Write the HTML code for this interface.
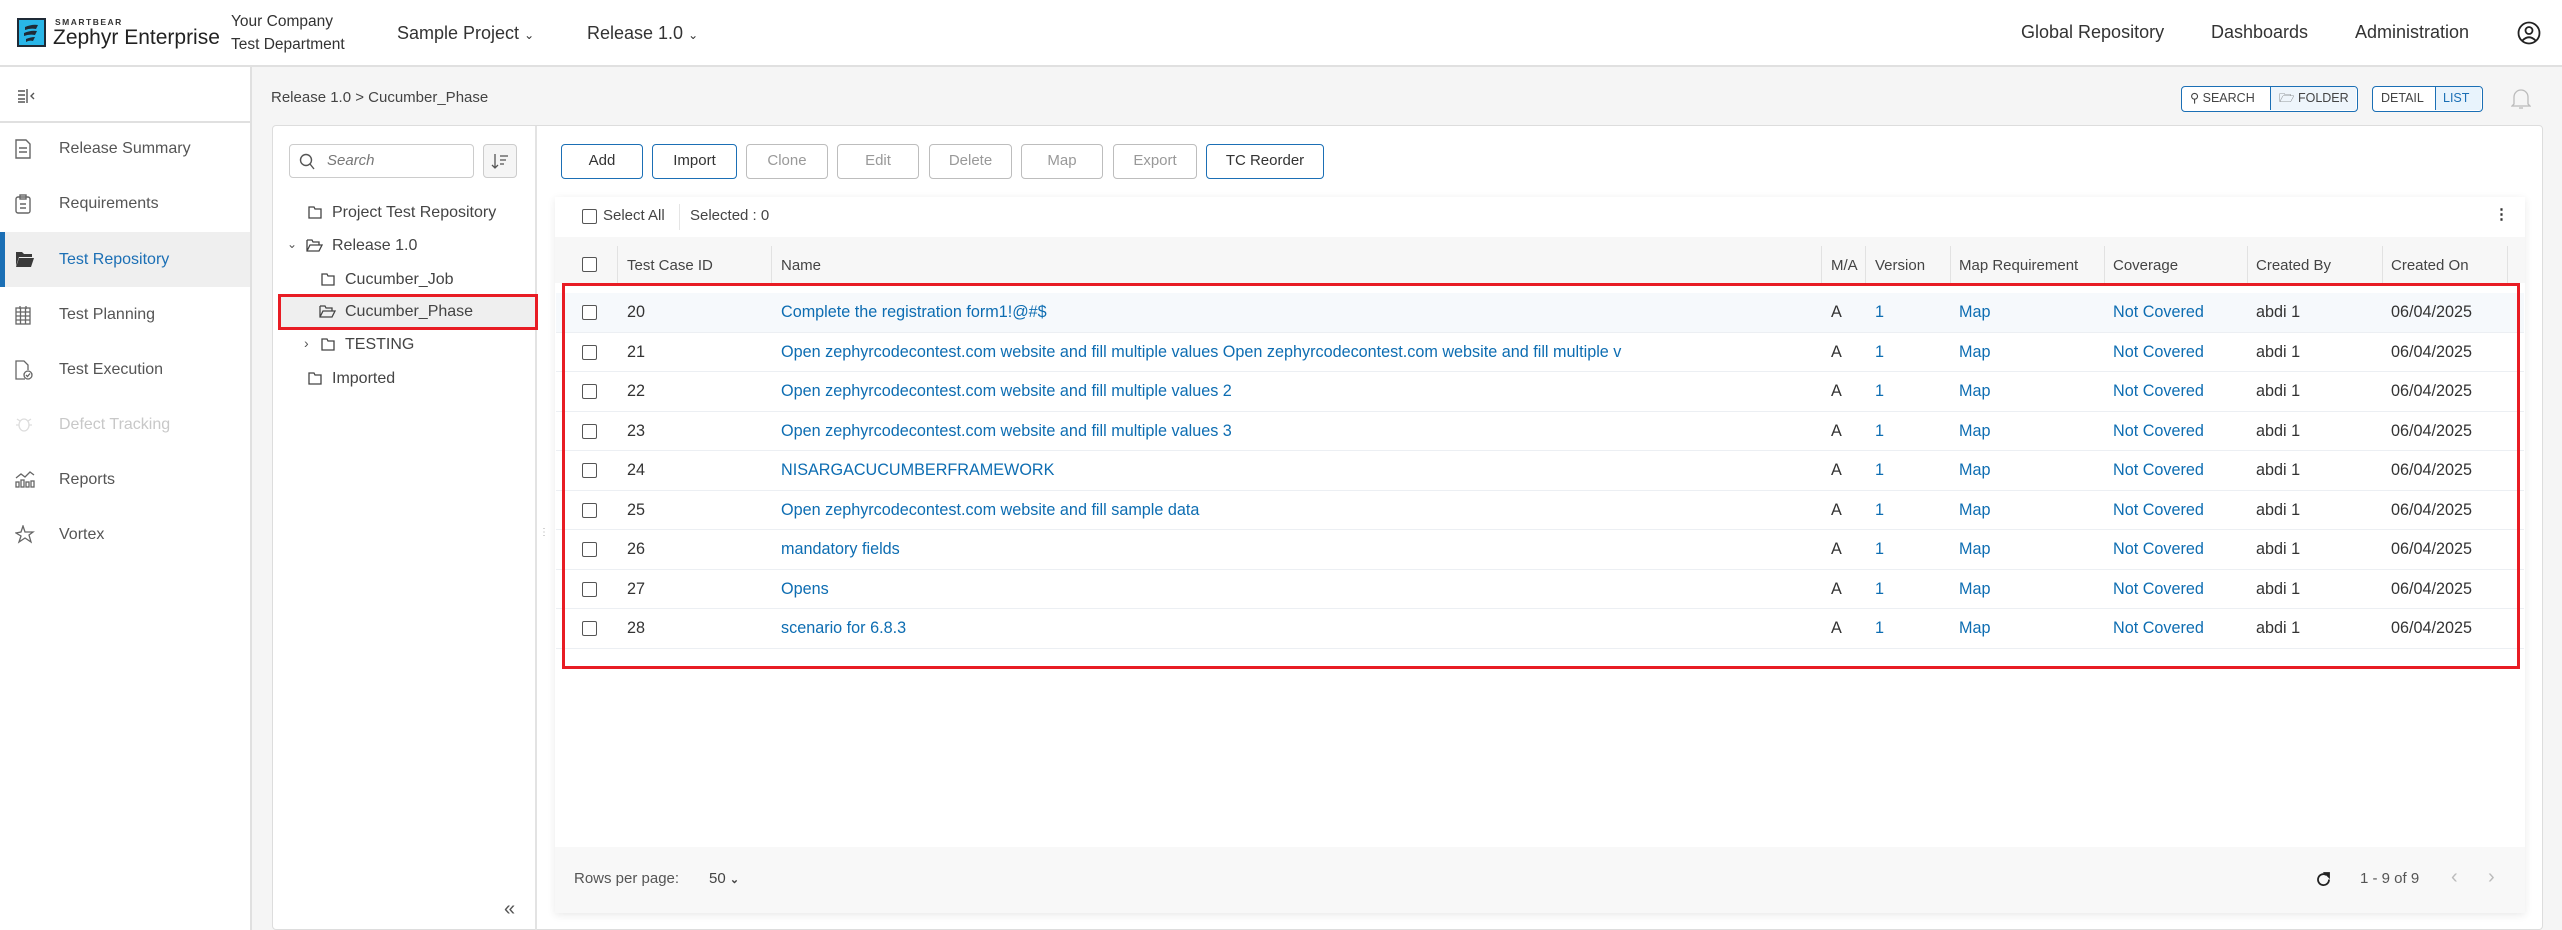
<!DOCTYPE html>
<html><head><meta charset="utf-8"><style>
*{box-sizing:border-box;margin:0;padding:0}
body{width:2562px;height:930px;overflow:hidden;background:#f5f5f5;font-family:"Liberation Sans",sans-serif;color:#333;position:relative}
.a{position:absolute;white-space:nowrap}
.hdr{left:0;top:0;width:2562px;height:67px;background:#fff;border-bottom:2px solid #e0e0e0}
.side{left:0;top:67px;width:252px;height:863px;background:#fff;border-right:2px solid #e0e0e0}
.nav{left:0;width:250px;height:55px;font-size:16px;color:#555;line-height:55px;padding-left:59px}
.nav svg{position:absolute;left:15px;top:18px}
.btn{top:144px;height:35px;border:1.5px solid #1b6fb5;border-radius:4px;font-size:15px;text-align:center;line-height:32px;color:#333;background:#fff}
.dis{border-color:#bdbdbd;color:#999}
.th{top:243px;height:46px;line-height:46px;font-size:15px;color:#444}
.cb{width:15px;height:15px;border:1.5px solid #555;border-radius:2px;background:#fff}
.row{left:556px;width:1968px;height:39.5px;border-bottom:1px solid #eceff3;font-size:16.2px;line-height:39px}
.row span{position:absolute}
.l{color:#0d6db2}
.tree{font-size:16px;color:#444;line-height:20px}
</style></head><body>
<div class="a hdr"></div>
<svg class="a" style="left:17px;top:18px" width="29" height="29" viewBox="0 0 29 29"><rect width="29" height="29" fill="#1f2a36"/><rect x="2" y="2" width="25" height="25" fill="#29b6e8"/><path d="M8 9 Q15 6 21 7 L19 11 Q13 10 8 12Z M7 15 Q14 12 20 13 L18 17 Q12 16 7 18Z M9 21 Q14 19 18 19 L16 23 Q12 22 9 24Z" fill="#1f2a36"/></svg>
<div class="a" style="left:55px;top:17px;font-size:8.5px;letter-spacing:1.5px;color:#333;font-weight:bold">SMARTBEAR</div>
<div class="a" style="left:53px;top:26px;font-size:21px;color:#222">Zephyr Enterprise</div>
<div class="a" style="left:231px;top:13px;font-size:15.5px;color:#333">Your Company</div>
<div class="a" style="left:231px;top:36px;font-size:15.5px;color:#333">Test Department</div>
<div class="a" style="left:397px;top:23px;font-size:18px;color:#333">Sample Project <span style="font-size:12px">&#8964;</span></div>
<div class="a" style="left:587px;top:23px;font-size:18px;color:#333">Release 1.0 <span style="font-size:12px">&#8964;</span></div>
<div class="a" style="left:2021px;top:22px;font-size:18px;color:#333">Global Repository</div>
<div class="a" style="left:2211px;top:22px;font-size:18px;color:#333">Dashboards</div>
<div class="a" style="left:2355px;top:22px;font-size:18px;color:#333">Administration</div>
<svg class="a" style="left:2517px;top:21px" width="24" height="24" viewBox="0 0 24 24" fill="none" stroke="#222" stroke-width="1.8"><circle cx="12" cy="12" r="10.5"/><circle cx="12" cy="9.5" r="3.5"/><path d="M5.5 19.5 Q12 13 18.5 19.5"/></svg>

<div class="a side"></div>
<div class="a" style="left:0;top:121px;width:250px;height:1.5px;background:#e0e0e0"></div>
<svg class="a" style="left:17px;top:88px" width="20" height="16" viewBox="0 0 20 16" fill="none" stroke="#555" stroke-width="1.4"><path d="M1 3h7M1 7h7M1 11h7M1 14h7M10 1v14M17 5l-3 3 3 3"/></svg>
<div class="a nav" style="top:121px"><svg width="16" height="20" viewBox="0 0 16 20" fill="none" stroke="#666" stroke-width="1.4"><path d="M1 1h10l4 4v14H1z"/><path d="M4 9h8M4 13h8"/></svg>Release Summary</div>
<div class="a nav" style="top:176px"><svg width="16" height="20" viewBox="0 0 16 20" fill="none" stroke="#666" stroke-width="1.4"><rect x="1" y="3" width="14" height="16" rx="2"/><rect x="5" y="1" width="6" height="4"/><path d="M5 10h6M5 14h6"/></svg>Requirements</div>
<div class="a nav" style="top:232px;height:55px;background:#efefef;color:#1b6fb5;border-left:5px solid #1b6fb5;padding-left:54px"><svg style="left:10px" width="20" height="18" viewBox="0 0 20 18"><path d="M1 2h6l2 2h8v3H4L1 16z" fill="#3a3a3a"/><path d="M4 8h15l-3 9H1z" fill="#3a3a3a"/></svg>Test Repository</div>
<div class="a nav" style="top:287px"><svg width="16" height="20" viewBox="0 0 16 20" fill="none" stroke="#666" stroke-width="1.3"><rect x="1" y="3" width="14" height="16"/><path d="M1 7h14M1 11h14M1 15h14M5.5 3v16M10.5 3v16M5 1v3M11 1v3"/></svg>Test Planning</div>
<div class="a nav" style="top:342px"><svg width="18" height="20" viewBox="0 0 18 20" fill="none" stroke="#666" stroke-width="1.3"><path d="M10 19H1V1h8l4 4v5"/><circle cx="13" cy="15" r="4"/><path d="M11 15l1.5 1.5 2.5-3"/></svg>Test Execution</div>
<div class="a nav" style="top:397px;color:#c8c8c8"><svg width="18" height="18" viewBox="0 0 18 18" fill="none" stroke="#ddd" stroke-width="1.3"><ellipse cx="9" cy="10" rx="5" ry="6"/><path d="M1 10h3M14 10h3M2 4l3 2M16 4l-3 2"/></svg>Defect Tracking</div>
<div class="a nav" style="top:452px"><svg width="20" height="18" viewBox="0 0 20 18" fill="none" stroke="#666" stroke-width="1.3"><path d="M1 8l5-4 4 3 5-5 4 3"/><rect x="1" y="12" width="3" height="5"/><rect x="6" y="10" width="3" height="7"/><rect x="11" y="12" width="3" height="5"/><rect x="16" y="11" width="3" height="6"/></svg>Reports</div>
<div class="a nav" style="top:507px"><svg width="20" height="20" viewBox="0 0 20 20" fill="none" stroke="#666" stroke-width="1.3"><path d="M8 1l2 6h8l-4 3 2 7-6-4-6 4 2-6-5-3 5-1z"/></svg>Vortex</div>

<div class="a" style="left:271px;top:89px;font-size:15px;color:#444">Release 1.0 &gt; Cucumber_Phase</div>
<div class="a" style="left:2181px;top:86px;width:177px;height:26px;border:1.5px solid #1b6fb5;border-radius:4px;background:#fff;font-size:12.5px;color:#444;line-height:23px;overflow:hidden"><span style="position:absolute;left:8px">&#9906; SEARCH</span><span style="position:absolute;left:88px;top:0;width:86px;height:23px;border-left:1.5px solid #1b6fb5;background:#eef5fb;padding-left:8px">&#128449; FOLDER</span></div>
<div class="a" style="left:2372px;top:86px;width:111px;height:26px;border:1.5px solid #1b6fb5;border-radius:4px;background:#fff;font-size:12.5px;color:#444;line-height:23px;overflow:hidden"><span style="position:absolute;left:8px">DETAIL</span><span style="position:absolute;left:62px;width:46px;height:23px;border-left:1.5px solid #1b6fb5;background:#e8f3fc;color:#1b6fb5;padding-left:7px">LIST</span></div>
<svg class="a" style="left:2511px;top:88px" width="20" height="22" viewBox="0 0 20 22" fill="none" stroke="#bbb" stroke-width="1.3"><path d="M3 16V9a7 7 0 0114 0v7l2 2H1z M8 20h4"/></svg>

<div class="a" style="left:272px;top:125px;width:2271px;height:805px;background:#fff;border:1.5px solid #ddd;border-radius:4px"></div>
<div class="a" style="left:535px;top:126px;width:1.5px;height:804px;background:#e3e3e3"></div>
<div class="a" style="left:539px;top:530px;font-size:10px;color:#aaa;line-height:5px">⋮</div>
<div class="a" style="left:289px;top:144px;width:185px;height:34px;border:1.5px solid #ccc;border-radius:4px;font-size:15px;color:#777;font-style:italic;line-height:31px;padding-left:37px">Search</div>
<svg class="a" style="left:299px;top:153px" width="16" height="17" viewBox="0 0 16 17" fill="none" stroke="#555" stroke-width="1.4"><circle cx="7" cy="7" r="5.5"/><path d="M11 11l4 5"/></svg>
<div class="a" style="left:483px;top:144px;width:34px;height:34px;border:1.5px solid #ccc;border-radius:4px;background:#f5f5f5"></div>
<svg class="a" style="left:491px;top:152px" width="18" height="18" viewBox="0 0 18 18" fill="none" stroke="#555" stroke-width="1.3"><path d="M4 2v14M1 13l3 3 3-3M9 4h8M9 8h6M9 12h4"/></svg>

<svg class="a" style="left:308px;top:204px" width="14" height="16" viewBox="0 0 14 14" fill="none" stroke="#444" stroke-width="1.3"><path d="M1 2h5l1 2h6v9H1z"/></svg>
<div class="a tree" style="left:332px;top:203px">Project Test Repository</div>
<div class="a" style="left:287px;top:237px;font-size:12px;color:#555">&#8964;</div>
<svg class="a" style="left:306px;top:237px" width="17" height="16" viewBox="0 0 17 14" fill="none" stroke="#444" stroke-width="1.3"><path d="M1 2h5l1 2h6v3M1 2v11h12l3-6H4l-3 6"/></svg>
<div class="a tree" style="left:332px;top:236px">Release 1.0</div>
<svg class="a" style="left:321px;top:271px" width="14" height="16" viewBox="0 0 14 14" fill="none" stroke="#444" stroke-width="1.3"><path d="M1 2h5l1 2h6v9H1z"/></svg>
<div class="a tree" style="left:345px;top:270px">Cucumber_Job</div>
<div class="a" style="left:280px;top:296px;width:255px;height:33px;background:#efefef"></div>
<svg class="a" style="left:319px;top:303px" width="17" height="16" viewBox="0 0 17 14" fill="none" stroke="#444" stroke-width="1.3"><path d="M1 2h5l1 2h6v3M1 2v11h12l3-6H4l-3 6"/></svg>
<div class="a tree" style="left:345px;top:302px">Cucumber_Phase</div>
<div class="a" style="left:278px;top:294px;width:260px;height:36px;border:3px solid #e81c24"></div>
<div class="a" style="left:304px;top:335px;font-size:14px;color:#555">&#8250;</div>
<svg class="a" style="left:321px;top:336px" width="14" height="16" viewBox="0 0 14 14" fill="none" stroke="#444" stroke-width="1.3"><path d="M1 2h5l1 2h6v9H1z"/></svg>
<div class="a tree" style="left:345px;top:335px">TESTING</div>
<svg class="a" style="left:308px;top:370px" width="14" height="16" viewBox="0 0 14 14" fill="none" stroke="#444" stroke-width="1.3"><path d="M1 2h5l1 2h6v9H1z"/></svg>
<div class="a tree" style="left:332px;top:369px">Imported</div>
<div class="a" style="left:504px;top:898px;font-size:20px;color:#555">&laquo;</div>

<div class="a btn" style="left:561px;width:82px">Add</div>
<div class="a btn" style="left:652px;width:85px">Import</div>
<div class="a btn dis" style="left:746px;width:82px">Clone</div>
<div class="a btn dis" style="left:837px;width:82px">Edit</div>
<div class="a btn dis" style="left:929px;width:83px">Delete</div>
<div class="a btn dis" style="left:1021px;width:82px">Map</div>
<div class="a btn dis" style="left:1113px;width:84px">Export</div>
<div class="a btn" style="left:1206px;width:118px">TC Reorder</div>

<div class="a" style="left:555px;top:197px;width:1970px;height:716px;background:#fff;box-shadow:0 2px 8px rgba(0,0,0,.09)"></div>
<div class="a cb" style="left:582px;top:209px"></div>
<div class="a" style="left:603px;top:207px;font-size:15px;color:#444">Select All</div>
<div class="a" style="left:679px;top:204px;width:1px;height:26px;background:#e5e5e5"></div>
<div class="a" style="left:690px;top:207px;font-size:15px;color:#444">Selected : 0</div>
<div class="a" style="left:2494px;top:205px;font-size:15px;font-weight:bold;color:#333">&#8942;</div>
<div class="a" style="left:555px;top:237px;width:1970px;height:46px;background:#f7f7f7"></div>
<div class="a cb" style="left:582px;top:257px"></div>
<div class="a" style="left:617px;top:246px;width:1px;height:37px;background:#e2e2e2"></div>
<div class="a" style="left:771px;top:246px;width:1px;height:37px;background:#e2e2e2"></div>
<div class="a" style="left:1821px;top:246px;width:1px;height:37px;background:#e2e2e2"></div>
<div class="a" style="left:1865px;top:246px;width:1px;height:37px;background:#e2e2e2"></div>
<div class="a" style="left:1950px;top:246px;width:1px;height:37px;background:#e2e2e2"></div>
<div class="a" style="left:2104px;top:246px;width:1px;height:37px;background:#e2e2e2"></div>
<div class="a" style="left:2247px;top:246px;width:1px;height:37px;background:#e2e2e2"></div>
<div class="a" style="left:2382px;top:246px;width:1px;height:37px;background:#e2e2e2"></div>
<div class="a" style="left:2507px;top:246px;width:1px;height:37px;background:#e2e2e2"></div>
<div class="a th" style="left:627px">Test Case ID</div>
<div class="a th" style="left:781px">Name</div>
<div class="a th" style="left:1831px">M/A</div>
<div class="a th" style="left:1875px">Version</div>
<div class="a th" style="left:1959px">Map Requirement</div>
<div class="a th" style="left:2113px">Coverage</div>
<div class="a th" style="left:2256px">Created By</div>
<div class="a th" style="left:2391px">Created On</div>

<div class="a row" style="top:293px;background:#f6f9fc"><span class="cb" style="left:26px;top:12px"></span><span style="left:71px">20</span><span class="l" style="left:225px">Complete the registration form1!@#$</span><span style="left:1275px">A</span><span class="l" style="left:1319px">1</span><span class="l" style="left:1403px">Map</span><span class="l" style="left:1557px">Not Covered</span><span style="left:1700px">abdi 1</span><span style="left:1835px">06/04/2025</span></div>
<div class="a row" style="top:332.5px"><span class="cb" style="left:26px;top:12px"></span><span style="left:71px">21</span><span class="l" style="left:225px">Open zephyrcodecontest.com website and fill multiple values Open zephyrcodecontest.com website and fill multiple v</span><span style="left:1275px">A</span><span class="l" style="left:1319px">1</span><span class="l" style="left:1403px">Map</span><span class="l" style="left:1557px">Not Covered</span><span style="left:1700px">abdi 1</span><span style="left:1835px">06/04/2025</span></div>
<div class="a row" style="top:372px"><span class="cb" style="left:26px;top:12px"></span><span style="left:71px">22</span><span class="l" style="left:225px">Open zephyrcodecontest.com website and fill multiple values 2</span><span style="left:1275px">A</span><span class="l" style="left:1319px">1</span><span class="l" style="left:1403px">Map</span><span class="l" style="left:1557px">Not Covered</span><span style="left:1700px">abdi 1</span><span style="left:1835px">06/04/2025</span></div>
<div class="a row" style="top:411.5px"><span class="cb" style="left:26px;top:12px"></span><span style="left:71px">23</span><span class="l" style="left:225px">Open zephyrcodecontest.com website and fill multiple values 3</span><span style="left:1275px">A</span><span class="l" style="left:1319px">1</span><span class="l" style="left:1403px">Map</span><span class="l" style="left:1557px">Not Covered</span><span style="left:1700px">abdi 1</span><span style="left:1835px">06/04/2025</span></div>
<div class="a row" style="top:451px"><span class="cb" style="left:26px;top:12px"></span><span style="left:71px">24</span><span class="l" style="left:225px">NISARGACUCUMBERFRAMEWORK</span><span style="left:1275px">A</span><span class="l" style="left:1319px">1</span><span class="l" style="left:1403px">Map</span><span class="l" style="left:1557px">Not Covered</span><span style="left:1700px">abdi 1</span><span style="left:1835px">06/04/2025</span></div>
<div class="a row" style="top:490.5px"><span class="cb" style="left:26px;top:12px"></span><span style="left:71px">25</span><span class="l" style="left:225px">Open zephyrcodecontest.com website and fill sample data</span><span style="left:1275px">A</span><span class="l" style="left:1319px">1</span><span class="l" style="left:1403px">Map</span><span class="l" style="left:1557px">Not Covered</span><span style="left:1700px">abdi 1</span><span style="left:1835px">06/04/2025</span></div>
<div class="a row" style="top:530px"><span class="cb" style="left:26px;top:12px"></span><span style="left:71px">26</span><span class="l" style="left:225px">mandatory fields</span><span style="left:1275px">A</span><span class="l" style="left:1319px">1</span><span class="l" style="left:1403px">Map</span><span class="l" style="left:1557px">Not Covered</span><span style="left:1700px">abdi 1</span><span style="left:1835px">06/04/2025</span></div>
<div class="a row" style="top:569.5px"><span class="cb" style="left:26px;top:12px"></span><span style="left:71px">27</span><span class="l" style="left:225px">Opens</span><span style="left:1275px">A</span><span class="l" style="left:1319px">1</span><span class="l" style="left:1403px">Map</span><span class="l" style="left:1557px">Not Covered</span><span style="left:1700px">abdi 1</span><span style="left:1835px">06/04/2025</span></div>
<div class="a row" style="top:609px"><span class="cb" style="left:26px;top:12px"></span><span style="left:71px">28</span><span class="l" style="left:225px">scenario for 6.8.3</span><span style="left:1275px">A</span><span class="l" style="left:1319px">1</span><span class="l" style="left:1403px">Map</span><span class="l" style="left:1557px">Not Covered</span><span style="left:1700px">abdi 1</span><span style="left:1835px">06/04/2025</span></div>
<div class="a" style="left:562px;top:283px;width:1958px;height:386px;border:3px solid #e81c24"></div>

<div class="a" style="left:555px;top:847px;width:1970px;height:66px;background:#f8f8f8"></div>
<div class="a" style="left:574px;top:870px;font-size:15px;color:#555">Rows per page:</div>
<div class="a" style="left:709px;top:870px;font-size:15px;color:#444">50 <span style="font-size:11px;font-weight:bold">&#8964;</span></div>
<svg class="a" style="left:2315px;top:871px" width="17" height="17" viewBox="0 0 17 17" fill="none" stroke="#222" stroke-width="1.8"><path d="M14 8.5A5.5 5.5 0 1 1 11.5 4"/><path d="M10 2h4v4z" fill="#222"/></svg>
<div class="a" style="left:2360px;top:870px;font-size:15px;color:#555">1 - 9 of 9</div>
<div class="a" style="left:2451px;top:866px;font-size:20px;color:#bbb">&#8249;</div>
<div class="a" style="left:2488px;top:866px;font-size:20px;color:#bbb">&#8250;</div>
</body></html>
